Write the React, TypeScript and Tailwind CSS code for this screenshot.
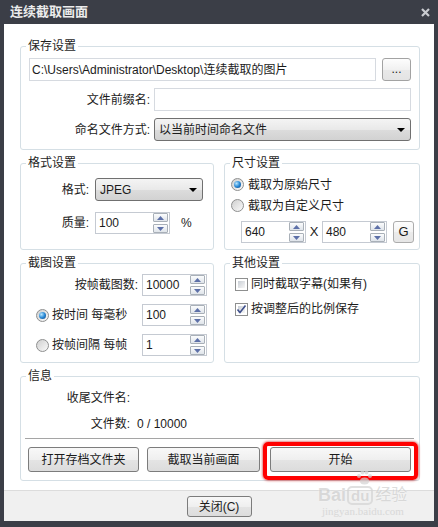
import React from "react";

const FONT = "font-['Liberation_Sans','Noto_Sans_CJK_SC',sans-serif]";

function Group({
  title,
  className = "",
  children,
}: {
  title: string;
  className?: string;
  children?: React.ReactNode;
}) {
  return (
    <fieldset className={`border border-[#d5dfe5] rounded-[3px] min-w-0 ${className}`}>
      <legend className="ml-[5px] px-[2px] text-[12px] leading-[16px] text-[#1e1e1e]">
        {title}
      </legend>
      {children}
    </fieldset>
  );
}

function Button({
  children,
  className = "",
}: {
  children?: React.ReactNode;
  className?: string;
}) {
  return (
    <div
      className={`flex items-center justify-center border border-[#7c7c7c] rounded-[3px] bg-[linear-gradient(#f8f8f8,#efefef_50%,#e4e4e4_52%,#dcdcdc)] ${className}`}
    >
      {children}
    </div>
  );
}

function Select({ value, className = "" }: { value: string; className?: string }) {
  return (
    <div
      className={`flex items-center h-[23px] border border-[#707070] rounded-[3px] bg-[linear-gradient(#f4f4f4,#e9e9e9_50%,#dcdcdc_52%,#d2d2d2)] pl-[4px] pr-[5px] ${className}`}
    >
      <span className="flex-1">{value}</span>
      <svg width="8" height="4" viewBox="0 0 8 4">
        <path d="M0 0H8L4 4Z" fill="#000" />
      </svg>
    </div>
  );
}

function SpinBtn({ up }: { up?: boolean }) {
  return (
    <div className="w-[15px] h-[9px] border border-[#a9b0b8] rounded-[1px] bg-[linear-gradient(#fbfcfd,#dfe4ea)] flex items-center justify-center">
      <svg width="7" height="4" viewBox="0 0 7 4">
        <path d={up ? "M0 4L3.5 0L7 4Z" : "M0 0H7L3.5 4Z"} fill="#5d70a8" />
      </svg>
    </div>
  );
}

function SpinBox({ value, className = "" }: { value: string; className?: string }) {
  return (
    <div className={`flex h-[22px] border border-[#c5cad2] bg-white ${className}`}>
      <div className="flex-1 pl-[3px] leading-[20px]">{value}</div>
      <div className="flex flex-col gap-[2px] pr-[1px]">
        <SpinBtn up />
        <SpinBtn />
      </div>
    </div>
  );
}

function Radio({ checked }: { checked?: boolean }) {
  return (
    <div className="w-[13px] h-[13px] shrink-0 rounded-full border border-[#8e8f8f] bg-[linear-gradient(135deg,#cfcfcf,#fafafa)] flex items-center justify-center">
      {checked && (
        <div className="w-[7px] h-[7px] rounded-full bg-[radial-gradient(circle_at_35%_35%,#b8e6ff,#2a8ad6_50%,#0d3d7a)]" />
      )}
    </div>
  );
}

function Check({ checked }: { checked?: boolean }) {
  return (
    <div className="w-[13px] h-[13px] shrink-0 border border-[#8e8f8f] bg-white p-[2px]">
      <div className="w-full h-full bg-[linear-gradient(135deg,#c9ced5,#f7f7f7)] flex items-center justify-center">
        {checked && (
          <svg width="9" height="9" viewBox="0 0 9 9" className="overflow-visible">
            <path d="M0.5 4.5L3 7.5L8.5 0.5" stroke="#3e4f8c" strokeWidth="1.6" fill="none" />
          </svg>
        )}
      </div>
    </div>
  );
}

export default function App() {
  return (
    <div
      className={`relative w-[438px] h-[527px] bg-[#3b3e47] px-[4px] pb-[6px] flex flex-col text-[12px] text-[#1b1b1b] ${FONT}`}
    >
      {/* TITLE */}
      <div className="h-[24px] flex items-center justify-between pl-[6px] pr-[4px]">
        <span className="text-[13px] font-bold text-[#ececec] leading-[16px]">连续截取画面</span>
        <svg width="9" height="9" viewBox="0 0 9 9">
          <path d="M1 1L8 8M8 1L1 8" stroke="#c9cbd0" strokeWidth="2.2" />
        </svg>
      </div>

      {/* BODY */}
      <div className="flex-1 flex flex-col bg-white">
        <div className="flex-1 flex flex-col gap-[5px] pt-[14px] pl-[16px] pr-[14px]">
          {/* SAVE */}
          <Group title="保存设置" className="h-[112px]">
            <div className="flex flex-col gap-[7px] pt-[4px] px-[8px]">
              <div className="flex gap-[6px] h-[23px]">
                <div className="flex-1 border border-[#d6dae0] flex items-center pl-[2px] whitespace-nowrap">
                  C:\Users\Administrator\Desktop\连续截取的图片
                </div>
                <Button className="w-[29px] border-[#a3a3a3] bg-[linear-gradient(#fdfdfd,#f1f1f1_50%,#e9e9e9_52%,#e4e4e4)]">
                  <span className="leading-[12px] pb-[2px]">...</span>
                </Button>
              </div>
              <div className="flex items-center h-[23px]">
                <span className="w-[121px] text-right">文件前缀名:</span>
                <div className="ml-[4px] flex-1 h-full border border-[#d6dae0]" />
              </div>
              <div className="flex items-center h-[23px]">
                <span className="w-[121px] text-right">命名文件方式:</span>
                <Select className="ml-[4px] flex-1" value="以当前时间命名文件" />
              </div>
            </div>
          </Group>

          {/* FORMAT + SIZE */}
          <div className="flex gap-[10px] h-[95px]">
            <Group title="格式设置" className="w-[194px] h-full">
              <div className="flex flex-col pt-[7px] pl-[8px]">
                <div className="flex items-center h-[23px]">
                  <span className="w-[60px] text-right">格式:</span>
                  <Select className="ml-[6px] w-[108px]" value="JPEG" />
                </div>
                <div className="flex items-center h-[22px] mt-[11px]">
                  <span className="w-[60px] text-right">质量:</span>
                  <SpinBox className="ml-[6px] w-[75px]" value="100" />
                  <span className="ml-[11px]">%</span>
                </div>
              </div>
            </Group>

            <Group title="尺寸设置" className="flex-1 h-full">
              <div className="flex flex-col pt-[3px] pl-[6px]">
                <div className="flex items-center gap-[4px] h-[21px]">
                  <Radio checked />
                  截取为原始尺寸
                </div>
                <div className="flex items-center gap-[4px] h-[21px]">
                  <Radio />
                  截取为自定义尺寸
                </div>
                <div className="flex items-center h-[22px] mt-[5px] pl-[10px]">
                  <SpinBox className="w-[65px]" value="640" />
                  <span className="w-[16px] text-center text-[13px]">X</span>
                  <SpinBox className="w-[65px]" value="480" />
                  <Button className="ml-[6px] w-[21px] h-[22px] border-[#acacac] bg-[linear-gradient(#fdfdfd,#f3f3f3_50%,#ebebeb_52%,#e6e6e6)]">
                    <span className="text-[13px]">G</span>
                  </Button>
                </div>
              </div>
            </Group>
          </div>

          {/* CAPTURE + OTHER */}
          <div className="flex gap-[10px] h-[108px]">
            <Group title="截图设置" className="w-[194px] h-full">
              <div className="flex flex-col gap-[8px] pt-[3px] pr-[6px]">
                <div className="flex items-center h-[22px]">
                  <span className="flex-1 text-right">按帧截图数:</span>
                  <SpinBox className="ml-[4px] w-[65px]" value="10000" />
                </div>
                <div className="flex items-center h-[22px] pl-[15px]">
                  <Radio checked />
                  <span className="ml-[3px]">按时间 每毫秒</span>
                  <SpinBox className="ml-auto w-[65px]" value="100" />
                </div>
                <div className="flex items-center h-[22px] pl-[15px]">
                  <Radio />
                  <span className="ml-[3px]">按帧间隔 每帧</span>
                  <SpinBox className="ml-auto w-[65px]" value="1" />
                </div>
              </div>
            </Group>

            <Group title="其他设置" className="flex-1 h-full">
              <div className="flex flex-col gap-[5px] pt-[3px] pl-[10px]">
                <div className="flex items-center gap-[3px] h-[20px]">
                  <Check />
                  同时截取字幕(如果有)
                </div>
                <div className="flex items-center gap-[3px] h-[20px]">
                  <Check checked />
                  按调整后的比例保存
                </div>
              </div>
            </Group>
          </div>

          {/* INFO */}
          <Group title="信息" className="h-[113px]">
            <div className="flex flex-col pt-[6px]">
              <div className="flex items-center h-[16px]">
                <span className="w-[109px] text-right">收尾文件名:</span>
              </div>
              <div className="flex items-center h-[16px] mt-[10px]">
                <span className="w-[109px] text-right">文件数:</span>
                <span className="ml-[7px]">0 / 10000</span>
              </div>
              <div className="mt-[6px] ml-[4px] mr-[5px] h-px bg-[#a5a5a5]" />
              <div className="flex mt-[8px] pl-[7px] h-[25px]">
                <Button className="w-[111px]">打开存档文件夹</Button>
                <Button className="ml-[8px] w-[113px]">截取当前画面</Button>
                <div className="relative ml-[10px] w-[141px]">
                  <Button className="w-full h-full">开始</Button>
                  <div className="absolute left-[-7px] right-[-7px] top-[-5px] bottom-[-8px] border-[4px] border-[#ff0000] rounded-[5px] shadow-[0_0_3px_#c00000]" />
                </div>
              </div>
            </div>
          </Group>
        </div>

        {/* FOOTER */}
        <div className="h-[31px] bg-[#f0f0f0] border-t border-[#dcdcdc] flex justify-center pt-[5px]">
          <Button className="w-[65px] h-[21px]">关闭(C)</Button>
        </div>
      </div>

      {/* WATERMARK */}
      <div className="absolute left-[316px] top-[468px] w-[100px] h-[52px] pointer-events-none text-[#cfcfcf] opacity-70">
        <svg className="absolute left-[40px] top-[2px]" width="17" height="15" viewBox="0 0 17 15">
          <circle cx="3" cy="6" r="2" fill="#d4d4d4" />
          <circle cx="6.5" cy="2.5" r="2" fill="#d4d4d4" />
          <circle cx="10.5" cy="2.5" r="2" fill="#d4d4d4" />
          <circle cx="14" cy="6" r="2" fill="#d4d4d4" />
          <ellipse cx="8.5" cy="11" rx="4.5" ry="3.5" fill="#d4d4d4" />
        </svg>
        <div className="absolute left-[2px] top-[17px] flex items-center font-bold text-[18px] leading-[20px] [text-shadow:0_0_2px_#fff]">
          <span>Bai</span>
          <span className="ml-[1px] px-[2px] rounded-[5px] border-2 border-[#d4d4d4] text-[15px] leading-[15px]">du</span>
          <span className="ml-[2px] text-[16px] font-normal">经验</span>
        </div>
        <div className="absolute left-[6px] top-[37px] text-[11px] leading-[12px] font-['Liberation_Serif',serif]">
          jingyan.baidu.com
        </div>
      </div>
    </div>
  );
}
